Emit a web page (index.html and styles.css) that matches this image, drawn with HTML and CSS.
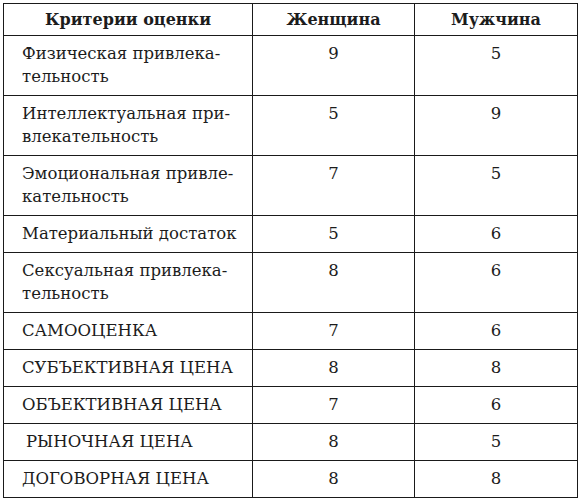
FILE: index.html
```html
<!DOCTYPE html>
<html lang="ru">
<head>
<meta charset="utf-8">
<title>Критерии оценки</title>
<link rel="stylesheet" href="styles.css">
</head>
<body>
<table class="grid">
  <colgroup>
    <col class="c1"><col class="c2"><col class="c3">
  </colgroup>
  <thead>
    <tr><th>Критерии оценки</th><th>Женщина</th><th>Мужчина</th></tr>
  </thead>
  <tbody>
    <tr><td class="name">Физическая привлека-<br>тельность</td><td>9</td><td>5</td></tr>
    <tr><td class="name">Интеллектуальная при-<br>влекательность</td><td>5</td><td>9</td></tr>
    <tr><td class="name">Эмоциональная привле-<br>кательность</td><td>7</td><td>5</td></tr>
    <tr><td class="name">Материальный достаток</td><td>5</td><td>6</td></tr>
    <tr><td class="name">Сексуальная привлека-<br>тельность</td><td>8</td><td>6</td></tr>
    <tr><td class="name">САМООЦЕНКА</td><td>7</td><td>6</td></tr>
    <tr><td class="name">СУБЪЕКТИВНАЯ ЦЕНА</td><td>8</td><td>8</td></tr>
    <tr><td class="name">ОБЪЕКТИВНАЯ ЦЕНА</td><td>7</td><td>6</td></tr>
    <tr><td class="name shifted">РЫНОЧНАЯ ЦЕНА</td><td>8</td><td>5</td></tr>
    <tr><td class="name">ДОГОВОРНАЯ ЦЕНА</td><td>8</td><td>8</td></tr>
  </tbody>
</table>
</body>
</html>
```
FILE: styles.css
```css
html, body {
  margin: 0;
  padding: 0;
  background: #fff;
}
body {
  padding: 3px 0 0 3px;
  font-family: "DejaVu Serif", serif;
  color: #1c1c1c;
}
.grid {
  border-collapse: collapse;
  table-layout: fixed;
  width: 575px;
  font-size: 16.5px;
  line-height: 23px;
}
.c1 { width: 249px; }
.c2 { width: 162px; }
.c3 { width: 163px; }
.grid th,
.grid td {
  border: 1px solid #1a1a1a;
  padding: 6px 6px 7px 6px;
  vertical-align: top;
  text-align: center;
}
.grid th {
  font-weight: bold;
  font-size: 16px;
  padding: 4px 6px 4px 6px;
  height: 23px;
}
.grid td.name {
  text-align: left;
  padding-left: 18px;
}
.grid td.shifted {
  padding-left: 22px;
}
```
